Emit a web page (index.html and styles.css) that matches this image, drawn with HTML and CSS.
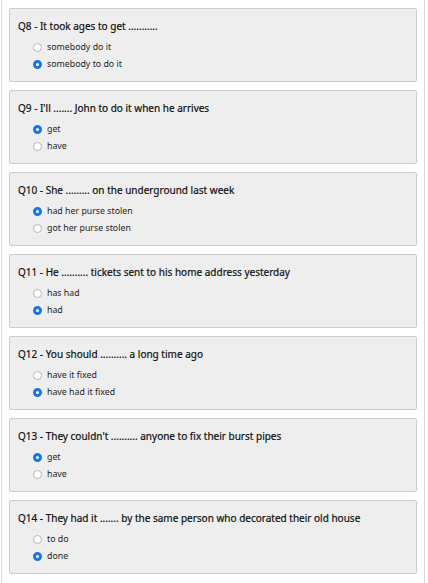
FILE: index.html
```html
<!DOCTYPE html>
<html>
<head>
<meta charset="utf-8">
<link rel="stylesheet" href="styles.css">
</head>
<body>
<div class="page">
  <div class="quiz">
    <div class="card">
      <div class="q">Q8 - It took ages to get ...........</div>
      <div class="opt"><span class="radio"></span>somebody do it</div>
      <div class="opt"><span class="radio on"></span>somebody to do it</div>
    </div>
    <div class="card">
      <div class="q">Q9 - I'll ....... John to do it when he arrives</div>
      <div class="opt"><span class="radio on"></span>get</div>
      <div class="opt"><span class="radio"></span>have</div>
    </div>
    <div class="card">
      <div class="q">Q10 - She ......... on the underground last week</div>
      <div class="opt"><span class="radio on"></span>had her purse stolen</div>
      <div class="opt"><span class="radio"></span>got her purse stolen</div>
    </div>
    <div class="card">
      <div class="q">Q11 - He .......... tickets sent to his home address yesterday</div>
      <div class="opt"><span class="radio"></span>has had</div>
      <div class="opt"><span class="radio on"></span>had</div>
    </div>
    <div class="card">
      <div class="q">Q12 - You should .......... a long time ago</div>
      <div class="opt"><span class="radio"></span>have it fixed</div>
      <div class="opt"><span class="radio on"></span>have had it fixed</div>
    </div>
    <div class="card">
      <div class="q">Q13 - They couldn't .......... anyone to fix their burst pipes</div>
      <div class="opt"><span class="radio on"></span>get</div>
      <div class="opt"><span class="radio"></span>have</div>
    </div>
    <div class="card">
      <div class="q">Q14 - They had it ....... by the same person who decorated their old house</div>
      <div class="opt"><span class="radio"></span>to do</div>
      <div class="opt"><span class="radio on"></span>done</div>
    </div>
  </div>
</div>
</body>
</html>
```

FILE: styles.css
```css
html, body {
  margin: 0;
  padding: 0;
  background: #fff;
}
.page {
  margin-left: 1px;
  width: 424px;
  border-left: 1px solid #dcdcdc;
  border-right: 1px solid #dcdcdc;
  min-height: 583px;
  box-sizing: border-box;
}
.quiz {
  display: flex;
  flex-direction: column;
  gap: 8px;
  padding: 8px 7px 0 7px;
}
.card {
  background: #eeeeee;
  border: 1px solid #cccccc;
  border-radius: 2px;
  height: 74px;
  box-sizing: border-box;
  padding: 9px 8px 0 8px;
  font-family: "Noto Sans", sans-serif;
  color: #1e1e1e;
}
.q {
  font-size: 10px;
  font-weight: 400;
  color: #111;
  line-height: 16px;
  margin-bottom: 5px;
  -webkit-text-stroke: 0.2px #111;
}
.opt {
  display: flex;
  align-items: center;
  font-size: 8.8px;
  line-height: 17px;
  padding-left: 15px;
}
.radio {
  width: 9px;
  height: 9px;
  border-radius: 50%;
  border: 1px solid #b5b5b5;
  background: #fff;
  box-sizing: border-box;
  margin-right: 5px;
  flex: none;
}
.radio.on {
  border: 3px solid #1a73e8;
  background: #fff;
}
```
